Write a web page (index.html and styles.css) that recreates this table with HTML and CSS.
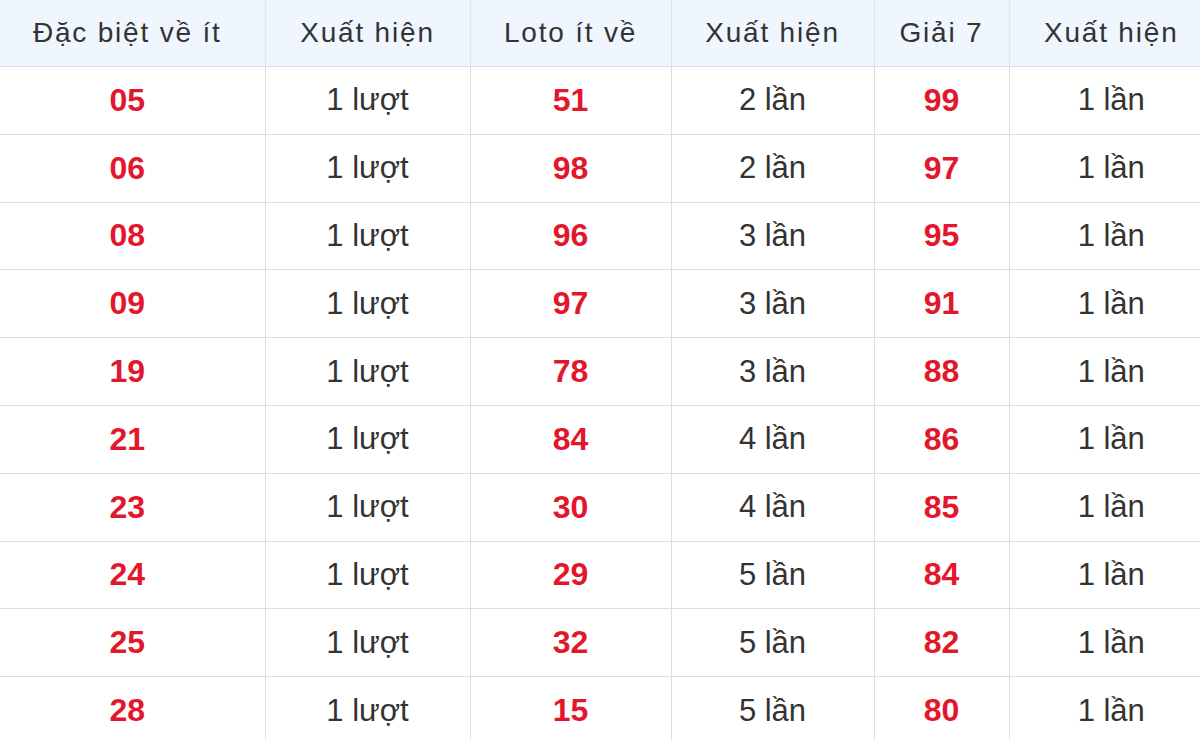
FILE: index.html
```html
<!DOCTYPE html>
<html lang="vi">
<head>
<meta charset="utf-8">
<title>Thống kê</title>
<link rel="stylesheet" href="styles.css">
</head>
<body>
<div class="wrap">
<table class="stats">
<colgroup>
<col class="c1"><col class="c2"><col class="c3"><col class="c4"><col class="c5"><col class="c6">
</colgroup>
<thead>
<tr><th>Đặc biệt về ít</th><th>Xuất hiện</th><th>Loto ít về</th><th>Xuất hiện</th><th>Giải 7</th><th>Xuất hiện</th></tr>
</thead>
<tbody>
<tr><td class="num">05</td><td>1 lượt</td><td class="num">51</td><td>2 lần</td><td class="num">99</td><td>1 lần</td></tr>
<tr><td class="num">06</td><td>1 lượt</td><td class="num">98</td><td>2 lần</td><td class="num">97</td><td>1 lần</td></tr>
<tr><td class="num">08</td><td>1 lượt</td><td class="num">96</td><td>3 lần</td><td class="num">95</td><td>1 lần</td></tr>
<tr><td class="num">09</td><td>1 lượt</td><td class="num">97</td><td>3 lần</td><td class="num">91</td><td>1 lần</td></tr>
<tr><td class="num">19</td><td>1 lượt</td><td class="num">78</td><td>3 lần</td><td class="num">88</td><td>1 lần</td></tr>
<tr><td class="num">21</td><td>1 lượt</td><td class="num">84</td><td>4 lần</td><td class="num">86</td><td>1 lần</td></tr>
<tr><td class="num">23</td><td>1 lượt</td><td class="num">30</td><td>4 lần</td><td class="num">85</td><td>1 lần</td></tr>
<tr><td class="num">24</td><td>1 lượt</td><td class="num">29</td><td>5 lần</td><td class="num">84</td><td>1 lần</td></tr>
<tr><td class="num">25</td><td>1 lượt</td><td class="num">32</td><td>5 lần</td><td class="num">82</td><td>1 lần</td></tr>
<tr><td class="num">28</td><td>1 lượt</td><td class="num">15</td><td>5 lần</td><td class="num">80</td><td>1 lần</td></tr>
</tbody>
</table>
</div>
</body>
</html>
```
FILE: styles.css
```css
html, body {
  margin: 0;
  padding: 0;
  background: #ffffff;
}
.wrap {
  width: 1200px;
  height: 740px;
  overflow: hidden;
}
.stats {
  width: 1223px;
  margin-left: -10px;
  table-layout: fixed;
  border-collapse: collapse;
  font-family: "Liberation Sans", Arial, sans-serif;
  color: #333333;
}
.c1 { width: 275px; }
.c2 { width: 205px; }
.c3 { width: 201px; }
.c4 { width: 203px; }
.c5 { width: 135px; }
.c6 { width: 204px; }
.stats th {
  height: 66px;
  padding: 0;
  background: #eff6fe;
  font-weight: normal;
  font-size: 28px;
  letter-spacing: 1.8px;
  text-align: center;
  vertical-align: middle;
  border-left: 1px solid #dde5ee;
  border-bottom: 1px solid #d5dde6;
}
.stats td {
  height: 66.8px;
  padding: 0;
  font-size: 31px;
  text-align: center;
  vertical-align: middle;
  border-left: 1px solid #dedede;
  border-bottom: 1px solid #dedede;
}
.stats th:first-child,
.stats td:first-child {
  border-left: none;
}
.stats td.num {
  color: #e3172b;
  font-weight: bold;
  font-size: 32px;
}
```
